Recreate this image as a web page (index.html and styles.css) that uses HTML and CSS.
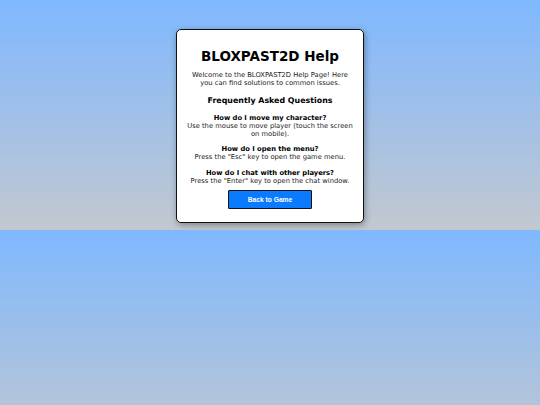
FILE: index.html
```html
<!DOCTYPE html>
<html>
<head>
<meta charset="utf-8">
<title>BLOXPAST2D Help</title>
<link rel="stylesheet" href="styles.css">
</head>
<body>
<div class="card">
  <h1 class="title">BLOXPAST2D Help</h1>
  <p class="intro">Welcome to the BLOXPAST2D Help Page! Here you can find solutions to common issues.</p>
  <h2 class="faq-heading">Frequently Asked Questions</h2>
  <div class="faq">
    <div class="item">
      <h3 class="q">How do I move my character?</h3>
      <p class="a">Use the mouse to move player (touch the screen on mobile).</p>
    </div>
    <div class="item">
      <h3 class="q">How do I open the menu?</h3>
      <p class="a">Press the "Esc" key to open the game menu.</p>
    </div>
    <div class="item">
      <h3 class="q">How do I chat with other players?</h3>
      <p class="a">Press the "Enter" key to open the chat window.</p>
    </div>
  </div>
  <button class="back">Back to Game</button>
</div>
</body>
</html>
```
FILE: styles.css
```css
html {
  margin: 0;
}
body {
  margin: 0;
  padding: 29px 0 7px;
  background: linear-gradient(to bottom, #7fb8ff, #c2c8d0);
  font-family: "DejaVu Sans", Verdana, sans-serif;
  color: #222;
}
.card {
  box-sizing: border-box;
  width: 188px;
  height: 194px;
  margin: 0 auto;
  background: #fff;
  border: 1.5px solid #111;
  border-radius: 5px;
  box-shadow: 1px 2px 6px rgba(0, 0, 0, 0.35);
  padding: 17.5px 9.5px 0;
  text-align: center;
  display: flex;
  flex-direction: column;
  align-items: center;
}
.title {
  margin: 0;
  font-size: 13.5px;
  line-height: 16px;
  font-weight: bold;
  color: #000;
}
.intro {
  margin: 8.5px 0 0;
  font-size: 6.75px;
  line-height: 7.9px;
}
.faq-heading {
  margin: 8.5px 0 0;
  font-size: 7.9px;
  line-height: 9.5px;
  font-weight: bold;
  color: #000;
}
.faq {
  margin-top: 7.8px;
  display: flex;
  flex-direction: column;
  gap: 7.2px;
}
.q {
  margin: 0;
  font-size: 6.75px;
  line-height: 8px;
  font-weight: bold;
  color: #000;
}
.a {
  margin: 0;
  font-size: 6.75px;
  line-height: 8.2px;
}
.back {
  margin-top: 5.7px;
  width: 84px;
  height: 19px;
  background: #0a7bff;
  color: #fff;
  border: 1.5px solid #111;
  border-radius: 1px;
  font-family: "Liberation Sans", Arial, sans-serif;
  font-size: 6.7px;
  font-weight: bold;
  padding: 0;
}
```
